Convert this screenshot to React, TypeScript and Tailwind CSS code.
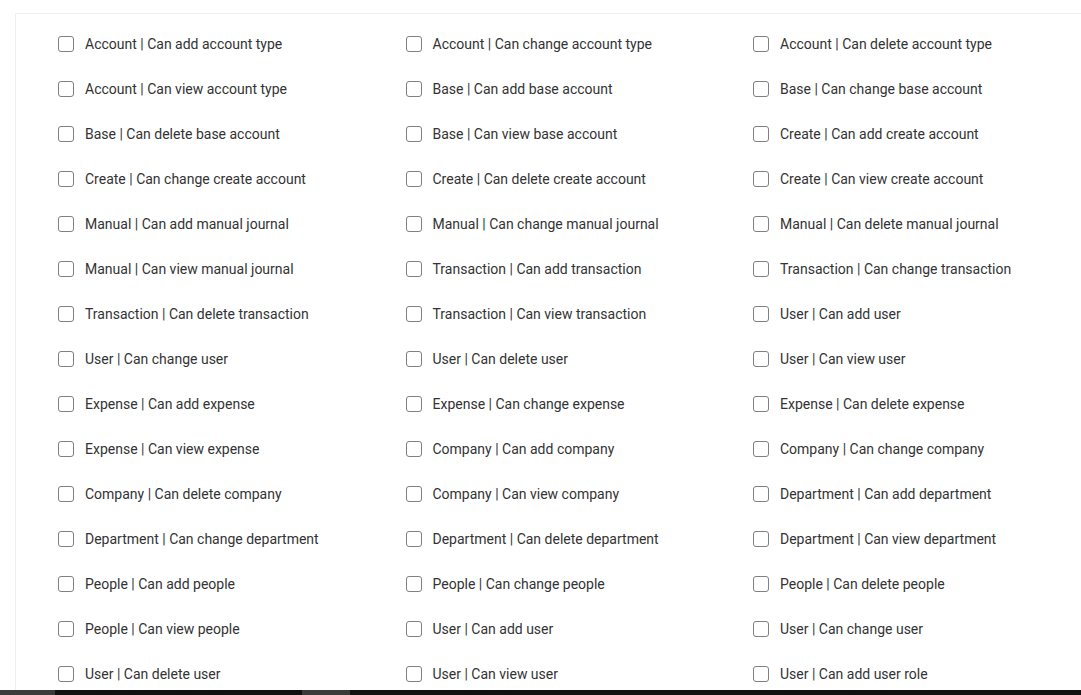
import React from "react";

const permissions = [
  "Account | Can add account type",
  "Account | Can change account type",
  "Account | Can delete account type",
  "Account | Can view account type",
  "Base | Can add base account",
  "Base | Can change base account",
  "Base | Can delete base account",
  "Base | Can view base account",
  "Create | Can add create account",
  "Create | Can change create account",
  "Create | Can delete create account",
  "Create | Can view create account",
  "Manual | Can add manual journal",
  "Manual | Can change manual journal",
  "Manual | Can delete manual journal",
  "Manual | Can view manual journal",
  "Transaction | Can add transaction",
  "Transaction | Can change transaction",
  "Transaction | Can delete transaction",
  "Transaction | Can view transaction",
  "User | Can add user",
  "User | Can change user",
  "User | Can delete user",
  "User | Can view user",
  "Expense | Can add expense",
  "Expense | Can change expense",
  "Expense | Can delete expense",
  "Expense | Can view expense",
  "Company | Can add company",
  "Company | Can change company",
  "Company | Can delete company",
  "Company | Can view company",
  "Department | Can add department",
  "Department | Can change department",
  "Department | Can delete department",
  "Department | Can view department",
  "People | Can add people",
  "People | Can change people",
  "People | Can delete people",
  "People | Can view people",
  "User | Can add user",
  "User | Can change user",
  "User | Can delete user",
  "User | Can view user",
  "User | Can add user role",
];

const App = () => {
  return (
    <div className="w-full h-[695px] flex flex-col bg-white overflow-hidden font-['Roboto',sans-serif]">
      <div className="flex-1 overflow-hidden pt-[13px] pl-[15px]">
        {/* permissions card */}
        <div className="w-[1100px] h-full border-t border-l border-[#f0f0f0] pl-[42px] pt-[8px]">
          <div className="grid grid-cols-[repeat(3,347.5px)]">
            {permissions.map((label, i) => (
              <label key={i} className="h-[45px] flex items-center gap-[11px] cursor-pointer">
                <span className="w-[16px] h-[16px] shrink-0 rounded-[3px] border-[1.5px] border-[#808080] bg-white -mt-[2px]" />
                <span className="text-[14px] text-[#333] whitespace-nowrap">{label}</span>
              </label>
            ))}
          </div>
        </div>
      </div>
      {/* scrollbar strip */}
      <div className="h-[5px] flex bg-[#111]">
        <div className="w-[55px] bg-[#3a3a3a]" />
        <div className="w-[247px]" />
        <div className="w-[48px] bg-[#3a3a3a]" />
      </div>
    </div>
  );
};

export default App;
